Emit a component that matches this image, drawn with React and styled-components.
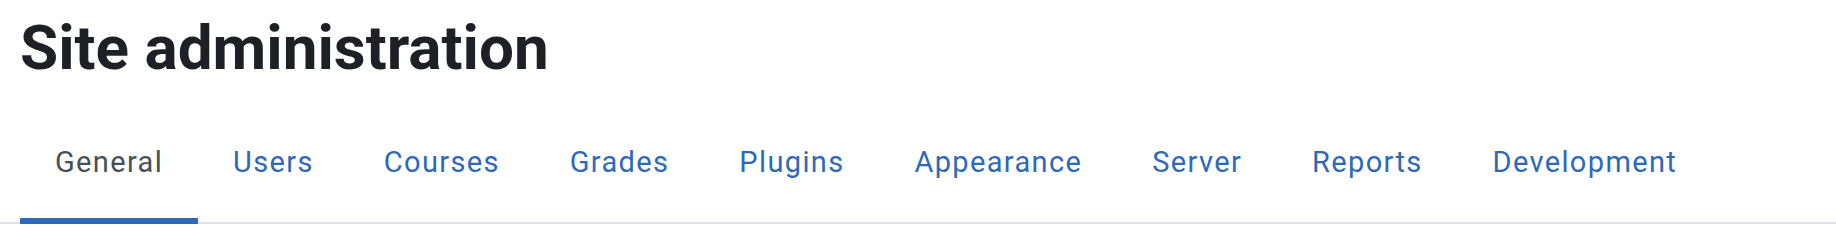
import React from "react";
import styled, { createGlobalStyle } from "styled-components";

const Global = createGlobalStyle`
  html, body { margin: 0; padding: 0; background: #ffffff; }
  body { font-family: Roboto, "Liberation Sans", Arial, sans-serif; }
`;

const Page = styled.div`
  width: 1836px;
  height: 250px;
  background: #ffffff;
  overflow: hidden;
`;

const Header = styled.header`
  padding: 11px 20px 0;
`;

const Title = styled.h1`
  margin: 0;
  font-family: Roboto, "Liberation Sans", Arial, sans-serif;
  font-weight: 700;
  font-size: 62px;
  line-height: 1.2;
  color: #1d2125;
  letter-spacing: 0;
`;

const Nav = styled.nav`
  margin-top: 23px;
  border-bottom: 2px solid #dee2e6;
`;

const TabList = styled.ul`
  display: flex;
  list-style: none;
  margin: 0 0 -2px;
  padding: 0 0 0 20px;
`;

const TabItem = styled.li`
  display: flex;
`;

const TabLink = styled.a`
  display: block;
  padding: 38px 35px 39px 35px;
  font-size: 29px;
  line-height: 33px;
  letter-spacing: 1.35px;
  text-decoration: none;
  white-space: nowrap;
  color: ${(p) => (p.$active ? "#4a4f55" : "#2e69b8")};
  border-bottom: 6px solid ${(p) => (p.$active ? "#2e69b8" : "transparent")};
  cursor: pointer;
`;

const tabs = [
  "General",
  "Users",
  "Courses",
  "Grades",
  "Plugins",
  "Appearance",
  "Server",
  "Reports",
  "Development",
];

export default function App() {
  return (
    <Page>
      <Global />
      <Header>
        <Title>Site administration</Title>
      </Header>
      <Nav>
        <TabList>
          {tabs.map((t, i) => (
            <TabItem key={t}>
              <TabLink $active={i === 0} href="#">
                {t}
              </TabLink>
            </TabItem>
          ))}
        </TabList>
      </Nav>
    </Page>
  );
}
